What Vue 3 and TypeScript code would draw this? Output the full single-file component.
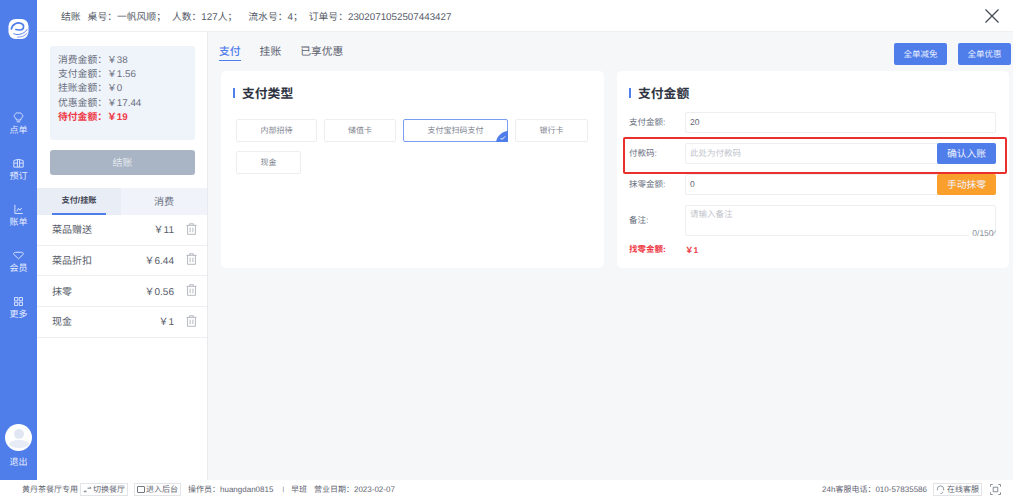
<script setup lang="ts">
const navItems = [
  { label: '点单', icon: 'M5.500 10C3 9.500 2 6 4.500 4.500 5 2.500 7.500 2 9 3c1.500-1 4-.5 4.500 1.500C16 6 15 9.500 12.500 10l-.5 2.500H6z M6.500 15h5' },
  { label: '预订', icon: 'M2.500 5l5-1.500h3l5 1.500v9h-13z M7.500 3.500V14 M10.500 3.500V14 M10.500 8.500h5 M2.500 8.500h5' },
  { label: '账单', icon: 'M4 2.500V14.500h11 M6.500 11.500l2.500-4 2 2.500 2.500-3' },
  { label: '会员', icon: 'M5 4.500h8c2 0 3.500 1.500 2.500 3L9 13.500 2.500 7.500C1.500 6 3 4.500 5 4.500z' },
  { label: '更多', icon: 'M3.500 3.500h4.500v4.500H3.500z M10 3.500h4.500v4.500H10z M3.500 10h4.500v4.500H3.500z M10 10h4.500v4.500H10z' }
]

const summary = [
  { label: '消费金额：', value: '￥38' },
  { label: '支付金额：', value: '￥1.56' },
  { label: '挂账金额：', value: '￥0' },
  { label: '优惠金额：', value: '￥17.44' },
  { label: '待付金额：', value: '￥19', due: true }
]

const records = [
  { name: '菜品赠送', amount: '￥11' },
  { name: '菜品折扣', amount: '￥6.44' },
  { name: '抹零', amount: '￥0.56' },
  { name: '现金', amount: '￥1' }
]

const payTypes = [
  { name: '内部招待', width: 81 },
  { name: '储值卡', width: 72 },
  { name: '支付宝扫码支付', width: 105, active: true },
  { name: '银行卡', width: 73 },
  { name: '现金', width: 65 }
]
</script>

<template>
  <div class="page">
    <div class="body">
      <aside class="sidebar">
        <svg class="logo" viewBox="0 0 22 22" width="21" height="22">
          <rect x="0.500" y="0.500" width="21" height="21" rx="7.500" fill="#fff" />
          <g fill="none" stroke="#4f7dea" stroke-linecap="round">
            <path d="M3.500 11C4.500 5.500 10 3.500 14 5.200c3.500 1.600 3 6.300-1 6.800-1.800.2-3.500 0-4.800-.4" stroke-width="1.700" />
            <path d="M6 16c4.500 1.800 10.500.8 14-4.500" stroke-width="1" />
            <path d="M10 19.500c3.500.3 7.500-1 10-4" stroke-width=".8" />
          </g>
        </svg>
        <nav class="nav">
          <div v-for="item in navItems" :key="item.label" class="nav-item">
            <svg viewBox="0 0 18 18" width="13" height="13" fill="none" stroke="#dfe8ff" stroke-width="1.300">
              <path :d="item.icon" />
            </svg>
            <span>{{ item.label }}</span>
          </div>
        </nav>
        <div class="user">
          <div class="avatar">
            <span class="head"></span>
            <span class="shoulder"></span>
          </div>
          <span>退出</span>
        </div>
      </aside>

      <div class="content">
        <header class="topbar">
          <span>结账</span>
          <span class="crumb-table">桌号：一帆风顺；</span>
          <span class="crumb-people">人数：127人；</span>
          <span class="crumb-serial">流水号：4；</span>
          <span class="crumb-order">订单号：2302071052507443427</span>
          <svg class="close" viewBox="0 0 14 14" width="14" height="14" fill="none" stroke="#3f4654" stroke-width="1.200">
            <path d="M.5.500l13 13M13.500.500l-13 13" />
          </svg>
        </header>

        <div class="workspace">
          <section class="left">
            <div class="summary">
              <div v-for="row in summary" :key="row.label" class="summary-row" :class="{ due: row.due }">
                {{ row.label }}{{ row.value }}
              </div>
            </div>
            <button class="checkout">结账</button>
            <div class="tabs">
              <div class="tab active">支付/挂账</div>
              <div class="tab">消费</div>
            </div>
            <div v-for="r in records" :key="r.name" class="record">
              <span class="record-name">{{ r.name }}</span>
              <span class="record-amount">{{ r.amount }}</span>
              <svg viewBox="0 0 12 13" width="11" height="12" fill="none" stroke="#a9adb5" stroke-width=".9">
                <path d="M.5 2.500h11M4 2.500V.8h4v1.700M1.700 2.500v9.800h8.600V2.500M4.500 5v5M7.500 5v5" />
              </svg>
            </div>
          </section>

          <main class="main">
            <div class="toolbar">
              <div class="pay-tabs">
                <span class="pay-tab active">支付</span>
                <span class="pay-tab">挂账</span>
                <span class="pay-tab">已享优惠</span>
              </div>
              <div class="actions">
                <button class="action">全单减免</button>
                <button class="action">全单优惠</button>
              </div>
            </div>

            <div class="cards">
              <section class="card type-card">
                <h3 class="card-title">支付类型</h3>
                <div class="types">
                  <div
                    v-for="t in payTypes"
                    :key="t.name"
                    class="type"
                    :class="{ active: t.active }"
                    :style="{ width: t.width + 'px' }"
                  >
                    {{ t.name }}
                    <svg v-if="t.active" class="check" viewBox="0 0 12 11" width="12" height="11">
                      <path d="M12 0v11H0C1 5 6 .5 12 0z" fill="#4f7dea" />
                      <path d="M4.500 7l1.500 1.500 3-3" fill="none" stroke="#fff" stroke-width="1" />
                    </svg>
                  </div>
                </div>
              </section>

              <section class="card amount-card">
                <h3 class="card-title">支付金额</h3>
                <div class="form">
                  <div class="field">
                    <label>支付金额:</label>
                    <div class="input">20</div>
                  </div>
                  <div class="field highlighted">
                    <label>付款码:</label>
                    <div class="input placeholder">
                      此处为付款码
                      <button class="append blue">确认入账</button>
                    </div>
                  </div>
                  <div class="field">
                    <label>抹零金额:</label>
                    <div class="input">
                      0
                      <button class="append orange">手动抹零</button>
                    </div>
                  </div>
                  <div class="field">
                    <label>备注:</label>
                    <div class="input textarea placeholder">
                      请输入备注
                      <span class="counter">0/150&#x2044;</span>
                    </div>
                  </div>
                  <div class="field change">
                    <label>找零金额:</label>
                    <strong>￥1</strong>
                  </div>
                </div>
              </section>
            </div>
          </main>
        </div>
      </div>
    </div>

    <footer class="footer">
      <span>黄丹茶餐厅专用</span>
      <span class="foot-btn btn-switch">
        <svg viewBox="0 0 10 8" width="9" height="7" fill="none" stroke="#5f6572" stroke-width=".9">
          <path d="M1 6.500h3M1 6.500l1.500-1.500M5 2.500h4M9 2.500L7.500 1" />
        </svg>
        切换餐厅
      </span>
      <span class="foot-btn btn-admin"><i class="square"></i>进入后台</span>
      <span class="operator">操作员：huangdan0815</span>
      <span class="sep">|</span>
      <span>早班</span>
      <span class="biz-date">营业日期：2023-02-07</span>
      <span class="phone">24h客服电话：010-57835586</span>
      <span class="foot-btn btn-service">
        <svg viewBox="0 0 10 10" width="9" height="9" fill="none" stroke="#7d8490" stroke-width=".9">
          <path d="M1.500 6V4.500a3.500 3.500 0 0 1 7 0V6M5 9.500c2 0 2.500-1 2.500-2" />
        </svg>
        在线客服
      </span>
      <svg class="fullscreen" viewBox="0 0 12 12" width="11" height="11" fill="none" stroke="#6f7682" stroke-width=".9">
        <path d="M.5 3V.5H3M9 .5h2.500V3M11.500 9v2.500H9M3 11.500H.5V9M3.500 3.500h5v5h-5z" />
      </svg>
    </footer>
  </div>
</template>

<style>
html,
body {
  margin: 0;
  background: #fff;
}
</style>

<style scoped>
.page {
  width: 1013px;
  height: 499px;
  display: flex;
  flex-direction: column;
  overflow: hidden;
  font-family: "Liberation Sans", "Noto Sans CJK SC", sans-serif;
  font-size: 10px;
  color: #5c6270;
  text-rendering: geometricPrecision;
}

button {
  text-rendering: geometricPrecision;
}

.body {
  flex: 1;
  display: flex;
  min-height: 0;
}

.sidebar {
  width: 37px;
  flex: none;
  background: #4f7dea;
  color: #e6edff;
  display: flex;
  flex-direction: column;
  align-items: center;
  font-size: 9px;
}

.logo {
  margin-top: 18px;
}

.nav {
  margin-top: 71px;
  display: flex;
  flex-direction: column;
  gap: 18px;
}

.nav-item {
  height: 28px;
  display: flex;
  flex-direction: column;
  align-items: center;
  line-height: 12px;
}

.user {
  margin-top: auto;
  margin-bottom: 12px;
  display: flex;
  flex-direction: column;
  align-items: center;
  gap: 5px;
  line-height: 12px;
}

.avatar {
  width: 27px;
  height: 27px;
  border-radius: 50%;
  background: #fff;
  overflow: hidden;
  display: flex;
  flex-direction: column;
  align-items: center;
}

.head {
  width: 10px;
  height: 10px;
  margin-top: 5px;
  border-radius: 50%;
  background: #e1e6f3;
}

.shoulder {
  width: 20px;
  height: 8px;
  margin-top: 1px;
  border-radius: 50%;
  background: #e7ebf6;
}

.content {
  flex: 1;
  min-width: 0;
  display: flex;
  flex-direction: column;
}

.topbar {
  height: 32px;
  flex: none;
  display: flex;
  align-items: center;
  padding-left: 24px;
  padding-right: 14px;
  box-sizing: border-box;
  background: #fff;
  border-bottom: 1px solid #eef0f3;
  font-size: 9.800px;
  color: #555b68;
}

.crumb-table {
  margin-left: 7px;
}

.crumb-people {
  margin-left: 6px;
}

.crumb-serial {
  margin-left: 11px;
}

.crumb-order {
  margin-left: 6px;
}

.close {
  margin-left: auto;
}

.workspace {
  flex: 1;
  display: flex;
  min-height: 0;
}

.left {
  width: 171px;
  flex: none;
  background: #fff;
  border-right: 1px solid #e8eaee;
  box-sizing: border-box;
}

.summary {
  margin: 14px 12px 0 13px;
  height: 94px;
  padding: 8px 8px;
  box-sizing: border-box;
  background: #eff3fa;
  border-radius: 3px;
  line-height: 14.200px;
  font-size: 9.800px;
  color: #6a7080;
}

.summary-row.due {
  color: #ee3b48;
  font-weight: 700;
}

.checkout {
  display: block;
  margin: 10px 0 0 13px;
  width: 145px;
  height: 25px;
  padding: 0 0 2px;
  border: 0;
  border-radius: 3px;
  background: #a9b4c4;
  color: #e4e8ee;
  font: inherit;
}

.tabs {
  margin-top: 13px;
  display: flex;
  height: 27px;
  background: #f0f3fa;
}

.tab {
  flex: 1;
  display: flex;
  align-items: center;
  justify-content: center;
  padding-bottom: 3px;
  box-sizing: border-box;
  color: #6a7080;
}

.tab.active {
  flex: 0 0 84px;
  position: relative;
  background: #e9edf5;
  color: #3e4452;
  font-size: 8.200px;
  font-weight: 700;
}

.tab.active::after {
  content: "";
  position: absolute;
  left: 15px;
  right: 15px;
  bottom: 0;
  height: 2px;
  background: #4f7dea;
}

.record {
  height: 30.670px;
  display: flex;
  align-items: center;
  padding: 0 10px 2px 15px;
  box-sizing: border-box;
  border-bottom: 1px solid #eceef2;
  font-size: 10px;
  color: #565c69;
}

.record-amount {
  margin-left: auto;
  margin-right: 12px;
}

.main {
  flex: 1;
  min-width: 0;
  background: #f6f7f9;
  padding: 11px 2px 0 13px;
  box-sizing: border-box;
}

.toolbar {
  height: 28px;
  display: flex;
  justify-content: space-between;
}

.pay-tabs {
  display: flex;
  gap: 19px;
  margin-left: -2px;
  height: 21px;
  font-size: 10.800px;
  line-height: 18px;
  color: #5c6270;
}

.pay-tab.active {
  color: #4f7dea;
  font-weight: 500;
  border-bottom: 1px solid #4f7dea;
  height: 17px;
}

.actions {
  display: flex;
  gap: 11px;
}

.action {
  width: 53px;
  height: 22px;
  padding: 0;
  border: 0;
  border-radius: 2px;
  background: #4f7dea;
  color: #e6edff;
  font: inherit;
  font-size: 8.500px;
}

.cards {
  display: flex;
  gap: 13px;
  padding-right: 2px;
}

.card {
  height: 197px;
  background: #fff;
  border-radius: 5px;
  box-sizing: border-box;
}

.type-card {
  width: 383px;
  padding: 0 15px;
}

.type-card .card-title {
  margin-left: -3px;
}

.amount-card {
  flex: 1;
  padding: 0 13px 0 12px;
}

.card-title {
  position: relative;
  margin: 0;
  padding-top: 14px;
  padding-left: 9px;
  font-size: 12.800px;
  line-height: 18px;
  color: #2f3442;
  font-weight: 700;
}

.card-title::before {
  content: "";
  position: absolute;
  left: 0;
  top: 17px;
  width: 2px;
  height: 10px;
  background: #4f7dea;
}

.types {
  margin-top: 16px;
  display: flex;
  flex-wrap: wrap;
  gap: 9px 7px;
}

.type {
  position: relative;
  height: 23px;
  box-sizing: border-box;
  border: 1px solid #eceef1;
  border-radius: 2px;
  display: flex;
  align-items: center;
  justify-content: center;
  font-size: 8px;
  color: #80858f;
}

.type.active {
  border-color: #7a9df0;
}

.check {
  position: absolute;
  right: -1px;
  bottom: -1px;
}

.form {
  margin-top: 9px;
  display: flex;
  flex-direction: column;
  gap: 10px;
}

.field {
  position: relative;
  display: flex;
  align-items: center;
  font-size: 8.500px;
  color: #6a7080;
}

.field label {
  width: 56px;
  flex: none;
  padding-bottom: 1px;
}

.input {
  position: relative;
  flex: 1;
  height: 21px;
  padding: 0 0 1px 4px;
  box-sizing: border-box;
  border: 1px solid #eceef1;
  border-radius: 2px;
  display: flex;
  align-items: center;
  color: #5f6572;
}

.placeholder {
  color: #bfc3cb;
}

.textarea {
  height: 31px;
  align-items: flex-start;
  padding-top: 2px;
}

.counter {
  position: absolute;
  right: 0;
  bottom: -3px;
  padding-left: 3px;
  background: #fff;
  color: #8b909a;
}

.append {
  position: absolute;
  right: -1px;
  top: -1px;
  width: 59px;
  height: 21px;
  padding: 0 0 2px;
  border: 0;
  border-radius: 2px;
  color: #eef2ff;
  font: inherit;
  font-size: 9.800px;
}

.blue {
  background: #4f7dea;
}

.orange {
  background: #fb9f2c;
}

.highlighted::after {
  content: "";
  position: absolute;
  left: -6px;
  right: -11px;
  top: -6px;
  bottom: -10px;
  border: 2px solid #e8302c;
  border-radius: 2px;
  pointer-events: none;
}

.change {
  margin-top: -3px;
  color: #ee3b48;
  font-weight: 700;
}

.change strong {
  font-weight: 700;
}

.footer {
  height: 19px;
  flex: none;
  display: flex;
  align-items: center;
  padding-left: 22px;
  padding-right: 12px;
  box-sizing: border-box;
  background: #fff;
  font-size: 8px;
  color: #5f6572;
  white-space: nowrap;
}

.foot-btn {
  height: 13px;
  display: inline-flex;
  align-items: center;
  padding: 0 2px;
  border: 1px solid #e2e4e8;
  box-sizing: border-box;
}

.btn-switch {
  margin-left: 2px;
  gap: 1px;
}

.btn-admin {
  margin-left: 6px;
}

.square {
  width: 6px;
  height: 5px;
  border: 1px solid #6f7682;
  border-radius: 1px;
  margin-right: 1px;
}

.operator {
  margin-left: 7px;
}

.sep {
  margin: 0 7px 0 9px;
  font-size: 6px;
}

.biz-date {
  margin-left: 7px;
}

.phone {
  margin-left: auto;
}

.btn-service {
  margin-left: 6px;
  gap: 2px;
}

.fullscreen {
  margin-left: 8px;
}
</style>
